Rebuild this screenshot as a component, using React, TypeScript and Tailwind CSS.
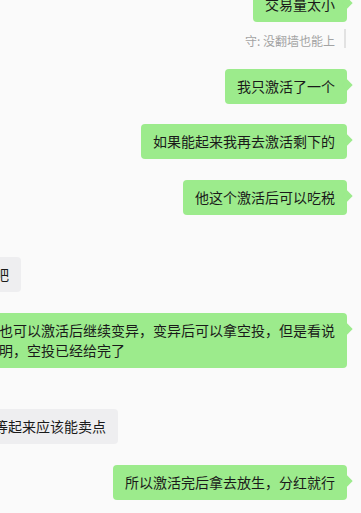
const font = { fontFamily: '"Noto Sans CJK SC", "Noto Sans", sans-serif' };

function MineBubble({ text, className = '' }: { text: React.ReactNode; className?: string }) {
  return (
    <div className={`flex justify-end pr-[14px] ${className}`}>
      <div className="relative rounded-[4px] bg-[#9ceb8c] px-[12px] pt-[7px] pb-[8px] text-[14px] leading-[20px] text-[#1a1a1a] whitespace-nowrap">
        {text}
        <span className="absolute right-[-4px] top-[12px] h-[8px] w-[8px] rotate-45 bg-[#9ceb8c]" />
      </div>
    </div>
  );
}

function OtherBubble({ text, className = '' }: { text: string; className?: string }) {
  return (
    <div className={`flex justify-start ${className}`}>
      <div className="rounded-[4px] bg-[#eeeef0] px-[12px] pt-[7px] pb-[8px] text-[14px] leading-[20px] text-[#1a1a1a] whitespace-nowrap">
        {text}
      </div>
    </div>
  );
}

export default function App() {
  return (
    <div className="h-[513px] w-[361px] overflow-hidden bg-[#fafafa]" style={font}>
      <div className="flex flex-col">
        <MineBubble text="交易量太小" className="mt-[-13px]" />

        <div className="mt-[7px] flex h-[19px] items-center justify-end pr-[15px]">
          <span className="pt-[5px] text-[12px] leading-[14px] text-[#a3a3a3]">守: 没翻墙也能上</span>
          <span className="ml-[9px] h-[19px] w-[2px] bg-[#e2e2e2]" />
        </div>

        <MineBubble text="我只激活了一个" className="mt-[21px]" />
        <MineBubble text="如果能起来我再去激活剩下的" className="mt-[20px]" />
        <MineBubble text="他这个激活后可以吃税" className="mt-[21px]" />

        <OtherBubble text="吧" className="mt-[42px] ml-[-17px]" />

        <MineBubble
          className="mt-[21px]"
          text={
            <>
              也可以激活后继续变异，变异后可以拿空投，但是看说
              <br />
              明，空投已经给完了
            </>
          }
        />

        <OtherBubble text="等起来应该能卖点" className="mt-[41px] ml-[-18px]" />

        <MineBubble text="所以激活完后拿去放生，分红就行" className="mt-[21px]" />
      </div>
    </div>
  );
}
